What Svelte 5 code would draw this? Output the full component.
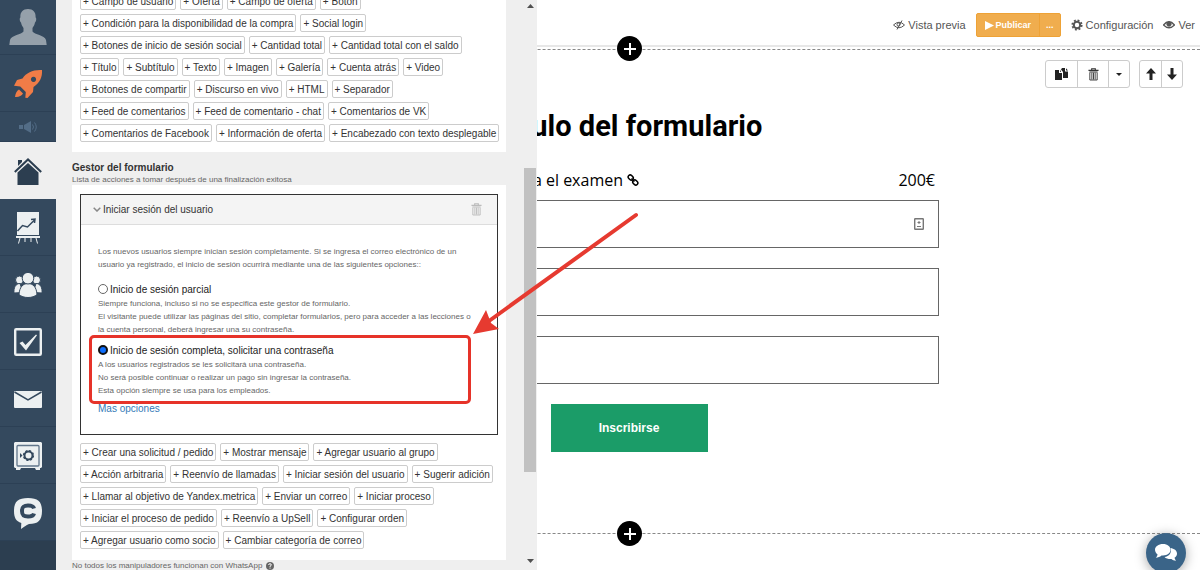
<script lang="ts">
	const fieldRows = [
		['Campo de usuario', 'Oferta', 'Campo de oferta', 'Botón'],
		['Condición para la disponibilidad de la compra', 'Social login'],
		['Botones de inicio de sesión social', 'Cantidad total', 'Cantidad total con el saldo'],
		['Título', 'Subtítulo', 'Texto', 'Imagen', 'Galería', 'Cuenta atrás', 'Video'],
		['Botones de compartir', 'Discurso en vivo', 'HTML', 'Separador'],
		['Feed de comentarios', 'Feed de comentario - chat', 'Comentarios de VK'],
		['Comentarios de Facebook', 'Información de oferta', 'Encabezado con texto desplegable']
	];

	const handlerRows = [
		['Crear una solicitud / pedido', 'Mostrar mensaje', 'Agregar usuario al grupo'],
		['Acción arbitraria', 'Reenvío de llamadas', 'Iniciar sesión del usuario', 'Sugerir adición'],
		['Llamar al objetivo de Yandex.metrica', 'Enviar un correo', 'Iniciar proceso'],
		['Iniciar el proceso de pedido', 'Reenvío a UpSell', 'Configurar orden'],
		['Agregar usuario como socio', 'Cambiar categoría de correo']
	];

	let loginMode = $state('full');
</script>

{#snippet chips(rows: string[][])}
	{#each rows as row}
		<div class="chip-row">
			{#each row as label}
				<button type="button" class="chip">+ {label}</button>
			{/each}
		</div>
	{/each}
{/snippet}

{#snippet trash()}
	<svg class="trash" viewBox="0 0 12 14" aria-hidden="true">
		<path d="M4 2V.7h4V2M.5 2.5h11M1.5 4.2h9" fill="none" stroke="currentColor" stroke-width="1.2" />
		<path d="M2 5v8h8V5M4.2 5v7.5M6 5v7.5M7.8 5v7.5" fill="none" stroke="currentColor" stroke-width="1" />
	</svg>
{/snippet}

<div class="app">
	<nav class="sidebar">
		<a href="#profile" class="profile" aria-label="Perfil">
			<svg width="38" height="38" viewBox="0 0 38 38">
				<path fill="#95a0aa" d="M19 1c5 0 8 3 7.600 8.500 1 .5.900 4-.6 5-.5 2.500-1.500 4-2.500 5.500v3.500c2 3 12 3.500 13.500 8.500l.7 5H.3L1 32c1.500-5 11.500-5.500 13.500-8.500V20c-1-1.500-2-3-2.500-5.500-1.500-1-1.600-4.500-.6-5C11 4 14 1 19 1z" />
			</svg>
		</a>
		<a href="#start" aria-label="Inicio rápido">
			<svg width="30" height="30" viewBox="0 0 30 30">
				<path fill="#f07c47" fill-rule="evenodd" d="M29 1c.5 7-2 12.500-8.500 17l-.5 5-5.500 6-2.200-.2.500-5.800-5.500-5.500-6.300-.8 3-5.700 5.500-1.500C13.500 3.500 20 .5 29 1zm-8.500 6.800a2.600 2.600 0 1 0 .01 0zM6 20.500l4 4c-1.500 2.500-4.500 4-8 3.500C2.500 24.500 3.500 22 6 20.500z" />
			</svg>
		</a>
		<a href="#news" class="short" aria-label="Novedades">
			<svg width="18" height="12" viewBox="0 0 18 12" fill="#536d87">
				<path d="M0 4h4v4H0zM5 4l7-4v12L5 8z" />
				<path d="M13.500 3.500q2 2.500 0 5M15.500 1.500q3.500 4.500 0 9" fill="none" stroke="#536d87" />
			</svg>
		</a>
		<a href="#home" class="active" aria-label="Inicio">
			<svg width="28" height="28" viewBox="0 0 28 28" fill="#2c3e50">
				<path d="M14 5l10.500 9.500V27h-21V14.500zM4 2h4v2L4 8z" />
				<path d="M.8 14L14 1.500 27.200 14" fill="none" stroke="#2c3e50" stroke-width="2" />
			</svg>
		</a>
		<a href="#stats" aria-label="Estadísticas">
			<svg width="24" height="32" viewBox="0 0 24 32">
				<path fill="#ecf0f1" d="M1 0h22v23H1zM0 24h24v2H0z" />
				<path d="M4 26l-1.500 5.500M9 26v4M15 26v4M20 26l1.500 5.500" stroke="#ecf0f1" fill="none" />
				<path d="M1.500 19l5-5.500 5 1.500 7-7M15 7.500l4-.5-.5 4" stroke="#34495e" stroke-width="1.500" fill="none" />
			</svg>
		</a>
		<a href="#users" aria-label="Usuarios">
			<svg width="28" height="26" viewBox="0 0 28 26" fill="#ecf0f1" stroke="#34495e">
				<circle cx="5.500" cy="8" r="4" /><circle cx="22.500" cy="8" r="4" />
				<path d="M0 21c-.5-5 1.500-9.500 6-9.500l3 9zM28 21c.5-5-1.500-9.500-6-9.500l-3 9z" />
				<path d="M5 22.500C5.500 15 9 11.500 14 11.500s8.500 3.500 9 11C19 26.500 9 26.500 5 22.500z" />
				<circle cx="14" cy="6.200" r="5.800" />
			</svg>
		</a>
		<a href="#tasks" aria-label="Tareas">
			<svg width="28" height="28" viewBox="0 0 28 28" fill="none">
				<rect x="1.200" y="1.200" width="25.600" height="25.600" rx="1" stroke="#ecf0f1" stroke-width="2.400" />
				<path fill="#ecf0f1" d="M5.500 15l3-1.500 3 3.500L22 6.500l1 .8L12 22.500z" />
			</svg>
		</a>
		<a href="#mail" aria-label="Mensajes">
			<svg width="28" height="17" viewBox="0 0 28 17">
				<rect width="28" height="17" rx="1" fill="#ecf0f1" />
				<path d="M.5 1L14 9 27.500 1" fill="none" stroke="#34495e" stroke-width="1.500" />
			</svg>
		</a>
		<a href="#safe" aria-label="Finanzas">
			<svg width="28" height="28" viewBox="0 0 28 28">
				<path fill="#ecf0f1" d="M1 0h26l1 1v24l-1 1h-1v2h-4l-1-2H7l-1 2H2v-2H1l-1-1V1z" />
				<rect x="3" y="3.500" width="22" height="20.500" rx="1" fill="none" stroke="#60758a" stroke-width="1.300" />
				<circle cx="14.500" cy="13.500" r="4" fill="none" stroke="#34495e" stroke-width="2" />
				<circle cx="14.500" cy="13.500" r="4.800" fill="none" stroke="#34495e" stroke-width="1.600" stroke-dasharray="2 1.770" />
				<path d="M6 11l2.500 2.500L6 16z" fill="#34495e" />
			</svg>
		</a>
		<a href="#chat" aria-label="Chat">
			<svg width="28" height="31" viewBox="0 0 28 31">
				<path fill="#ecf0f1" d="M14 0C24 0 28 3.500 28 13s-4 13-13 13c-3 1-5 3-8 5l.3-6C2 23 0 20 0 13 0 3.500 4 0 14 0z" />
				<path d="M20 10.500C19.500 8.500 18 7.500 14 7.500c-5 0-6 1.500-6 5.500s1 5.500 6 5.500c4 0 5.500-1 6-3" fill="none" stroke="#34495e" stroke-width="4" />
			</svg>
		</a>
	</nav>

	<main class="preview">
		<header class="topbar">
			<a href="#preview">
				<svg width="12" height="10" viewBox="0 0 12 10" fill="none" stroke="currentColor">
					<path d="M.5 5Q6-.5 11.500 5 6 10.500.5 5zM9 .5L4 9.500" /><circle cx="5.500" cy="4.500" r="1.500" />
				</svg>
				Vista previa
			</a>
			<div class="publish">
				<button type="button">
					<svg width="9" height="9" viewBox="0 0 9 9" fill="#fff"><path d="M0 0l9 4.500L0 9z" /></svg>
					Publicar
				</button>
				<button type="button" class="more" aria-label="Más">...</button>
			</div>
			<a href="#settings">
				<svg width="12" height="12" viewBox="0 0 12 12" fill="none" stroke="currentColor">
					<circle cx="6" cy="6" r="3.200" stroke-width="2" />
					<circle cx="6" cy="6" r="4.700" stroke-width="1.800" stroke-dasharray="1.900 1.790" />
				</svg>
				Configuración
			</a>
			<a href="#view">
				<svg width="12" height="10" viewBox="0 0 12 10" fill="none" stroke="currentColor">
					<path d="M.5 5Q6-1.500 11.500 5 6 10.500.5 5z" stroke-width="1.300" /><circle cx="6" cy="4" r="2.200" fill="currentColor" />
				</svg>
				Ver
			</a>
		</header>

		<section class="block">
			<button type="button" class="add top" aria-label="Agregar bloque arriba">
				<svg width="12" height="12" viewBox="0 0 12 12"><path d="M6 0v12M0 6h12" stroke="#fff" stroke-width="2" /></svg>
			</button>
			<div class="tools">
				<div class="tool-group">
					<button type="button" class="wide" aria-label="Copiar">
						<svg width="13" height="12" viewBox="0 0 13 12" fill="#222">
							<path d="M0 2h4v3h3v7H0zM5 1.500L6 4H5zM7 0h3v3.500h3V10H8V4L6 1.500zM11 .3L13 2.500h-2z" />
						</svg>
					</button>
					<button type="button" class="wide" aria-label="Eliminar">{@render trash()}</button>
					<button type="button" aria-label="Más acciones">
						<svg width="6" height="3" viewBox="0 0 6 3"><path d="M0 0h6L3 3z" fill="#222" /></svg>
					</button>
				</div>
				<div class="tool-group">
					<button type="button" aria-label="Subir">
						<svg width="10" height="12" viewBox="0 0 10 12"><path d="M5 0l5 5.500H6.500V12h-3V5.500H0z" fill="#222" /></svg>
					</button>
					<button type="button" aria-label="Bajar">
						<svg width="10" height="12" viewBox="0 0 10 12"><path d="M5 12l5-5.500H6.500V0h-3v6.500H0z" fill="#222" /></svg>
					</button>
				</div>
			</div>

			<form class="form" onsubmit={(e) => e.preventDefault()}>
				<h1>Título del formulario</h1>
				<div class="item">
					<span class="item-name">
						para el examen
						<svg width="12" height="12" viewBox="0 0 12 12" fill="none" stroke="#000" stroke-width="1.500">
							<rect x="1" y="1.500" width="5.500" height="4" rx="2" transform="rotate(45 3.700 3.500)" />
							<rect x="5.500" y="6.500" width="5.500" height="4" rx="2" transform="rotate(45 8.300 8.500)" />
							<path d="M4.500 4.500l3 3" />
						</svg>
					</span>
					<span>200€</span>
				</div>
				<label class="field">
					<input type="text" aria-label="Nombre" />
					<svg width="10" height="12" viewBox="0 0 10 12" fill="none" stroke="#777">
						<rect x=".7" y=".7" width="8.600" height="10.600" rx=".5" stroke-width="1.400" />
						<path d="M5 3v3M3.500 4.500h3M3 8.500h4" />
					</svg>
				</label>
				<label class="field"><input type="text" aria-label="Correo" /></label>
				<label class="field"><input type="text" aria-label="Teléfono" /></label>
				<button type="submit" class="submit">Inscribirse</button>
			</form>
			<button type="button" class="add bottom" aria-label="Agregar bloque abajo">
				<svg width="12" height="12" viewBox="0 0 12 12"><path d="M6 0v12M0 6h12" stroke="#fff" stroke-width="2" /></svg>
			</button>
		</section>
	</main>

	<aside class="panel">
		<div class="content">
			<div class="box fields">{@render chips(fieldRows)}</div>

			<h2>Gestor del formulario</h2>
			<p class="hint">Lista de acciones a tomar después de una finalización exitosa</p>

			<div class="box handlers">
				<div class="card">
					<div class="card-head">
						<svg width="8" height="5" viewBox="0 0 8 5"><path d="M.7.7L4 4 7.300.7" fill="none" stroke="#888" stroke-width="1.500" /></svg>
						<span>Iniciar sesión del usuario</span>
						<button type="button" class="remove" aria-label="Eliminar acción">{@render trash()}</button>
					</div>
					<div class="card-body">
						<p>
							Los nuevos usuarios siempre inician sesión completamente. Si se ingresa el correo electrónico de un<br />
							usuario ya registrado, el inicio de sesión ocurrirá mediante una de las siguientes opciones::
						</p>
						<div class="option">
							<label><input type="radio" name="login" value="partial" bind:group={loginMode} />Inicio de sesión parcial</label>
							<p>
								Siempre funciona, incluso si no se especifica este gestor de formulario.<br />
								El visitante puede utilizar las páginas del sitio, completar formularios, pero para acceder a las lecciones o<br />
								la cuenta personal, deberá ingresar una su contraseña.
							</p>
						</div>
						<div class="option highlighted">
							<label><input type="radio" name="login" value="full" bind:group={loginMode} />Inicio de sesión completa, solicitar una contraseña</label>
							<p>
								A los usuarios registrados se les solicitará una contraseña.<br />
								No será posible continuar o realizar un pago sin ingresar la contraseña.<br />
								Esta opción siempre se usa para los empleados.
							</p>
							<svg class="arrow" width="168" height="124" viewBox="0 0 168 124">
								<path d="M164 4L17 110" stroke="#e63a30" stroke-width="4" stroke-linecap="round" />
								<path d="M1 123L14 99l5 13 8 6z" fill="#e63a30" />
							</svg>
						</div>
						<a href="#more">Mas opciones</a>
					</div>
				</div>
				{@render chips(handlerRows)}
			</div>
			<p class="hint note">
				No todos los manipuladores funcionan con WhatsApp
				<svg width="8" height="8" viewBox="0 0 8 8">
					<circle cx="4" cy="4" r="4" fill="#666" />
					<path d="M2.600 3Q2.800 1.700 4 1.700T5.300 3Q5.200 3.700 4 4.300v.7M4 5.600v1" fill="none" stroke="#fff" />
				</svg>
			</p>
		</div>
		<div class="scrollbar" aria-hidden="true">
			<svg width="7" height="4" viewBox="0 0 7 4"><path d="M0 4h7L3.500 0z" fill="#505050" /></svg>
			<div class="track"><div class="thumb"></div></div>
			<svg width="7" height="4" viewBox="0 0 7 4"><path d="M0 0h7L3.500 4z" fill="#505050" /></svg>
		</div>
	</aside>

	<button type="button" class="support" aria-label="Soporte">
		<svg width="22" height="18" viewBox="0 0 22 18" fill="#fff">
			<path d="M15.500 4C19 4.500 22 6.500 22 9.500c0 2-1 3.500-2.500 4.300.2 1.200.8 2 1.500 3-2-.2-3.500-.8-4.500-1.800-3 .2-5.500-.5-7-2C14 12.500 17 9 15.500 4z" />
			<path d="M8 0c4.500 0 7.500 2.500 7.500 5.800S12.500 11.500 8 11.500l-1.500-.1C5 12.800 3 13.500.8 13.700c1-.9 1.600-2 1.700-3.400C1 9.300 0 7.700 0 5.800 0 2.500 3.500 0 8 0z" />
		</svg>
	</button>
</div>

<style>
	:global(body) {
		background: #fff;
		font-family: 'Liberation Sans', Arial, sans-serif;
		color: #333;
	}

	.app {
		display: grid;
		grid-template-columns: 56px 481px 1fr;
		grid-template-rows: 100vh;
		overflow: hidden;
	}

	.app :global(*),
	.highlighted::after {
		box-sizing: border-box;
	}

	svg {
		flex: none;
	}

	button {
		font-family: inherit;
		margin: 0;
		padding: 0;
		cursor: pointer;
	}

	h1,
	h2,
	p {
		margin: 0;
	}

	.sidebar {
		grid-area: 1 / 1;
		background: #2c3e50;
		overflow: hidden;
	}

	.sidebar a {
		display: flex;
		align-items: center;
		justify-content: center;
		height: 57px;
		padding-top: 2px;
		background: #34495e;
		border-bottom: 1px solid #2c4055;
	}

	.sidebar .profile {
		height: 55px;
		padding: 0;
	}

	.sidebar .short {
		height: 30px;
		padding: 0;
	}

	.sidebar .active {
		height: 57px;
		background: #efefef;
		border: 0;
	}

	/* the preview runs under the settings panel */
	.preview {
		grid-area: 1 / 2 / 2 / 4;
		display: flex;
		flex-direction: column;
		padding-left: 2px;
	}

	.topbar {
		display: flex;
		align-items: center;
		justify-content: flex-end;
		gap: 10px;
		height: 47px;
		padding: 5px 5px 0 0;
		border-bottom: 2px solid #e7e7e7;
	}

	.topbar a {
		display: flex;
		align-items: center;
		gap: 3px;
		font-size: 11px;
		color: #555;
		text-decoration: none;
	}

	.publish {
		display: flex;
		height: 24px;
		background: #f0ad4e;
		border: 1px solid #eea236;
		border-radius: 2px;
	}

	.publish button {
		display: flex;
		align-items: center;
		gap: 2px;
		padding: 0 8px;
		font-size: 9px;
		font-weight: 700;
		color: #fff;
		background: none;
		border: 0;
	}

	.publish .more {
		padding: 0 6px;
		border-left: 1px solid #eea236;
	}

	.block {
		position: relative;
		height: 485px;
		margin-top: 2px;
		border-top: 1px dashed #888;
		border-bottom: 1px dashed #888;
	}

	.add {
		position: absolute;
		left: calc(50% - 12px);
		display: flex;
		align-items: center;
		justify-content: center;
		width: 25px;
		height: 25px;
		background: #000;
		border: 0;
		border-radius: 50%;
	}

	.add.top {
		top: -14px;
	}

	.add.bottom {
		bottom: -13px;
	}

	.tools {
		display: flex;
		justify-content: flex-end;
		gap: 9px;
		padding: 10px 17px 0 0;
	}

	.tool-group {
		display: flex;
		height: 28px;
		border: 1px solid #ccc;
		border-radius: 3px;
	}

	.tool-group button {
		display: flex;
		align-items: center;
		justify-content: center;
		width: 21px;
		background: none;
		border: 0;
		color: #333;
	}

	.tool-group button + button {
		border-left: 1px solid #ccc;
	}

	.tool-group .wide {
		width: 31px;
	}

	.trash {
		width: 11px;
		height: 13px;
	}

	.form {
		display: flex;
		flex-direction: column;
		gap: 20px;
		max-width: 620px;
		margin: 18px auto 0;
	}

	h1 {
		font: 700 29px/40px Roboto, sans-serif;
		color: #000;
		text-align: center;
	}

	.item {
		display: flex;
		justify-content: space-between;
		height: 24px;
		margin: 2px 0 -12px;
		padding-right: 4px;
		font: 16px/24px 'Open Sans', sans-serif;
		color: #000;
	}

	.item-name {
		display: flex;
		align-items: center;
		justify-content: flex-end;
		gap: 4px;
		width: 320px;
	}

	.field {
		display: flex;
		align-items: center;
		height: 48px;
		padding-right: 14px;
		border: 1px solid #666;
	}

	.field input {
		flex: 1;
		height: 100%;
		border: 0;
		outline: 0;
		background: none;
	}

	.submit {
		align-self: center;
		width: 157px;
		height: 48px;
		font-size: 12px;
		font-weight: 700;
		color: #fff;
		background: #1b9c68;
		border: 0;
	}

	.panel {
		grid-area: 1 / 2;
		z-index: 1;
		display: flex;
		background: #efefef;
	}

	.content {
		flex: 1;
		min-width: 0;
		margin-top: -8px;
		padding: 0 18px 0 16px;
	}

	.box {
		padding: 0 8px;
		background: #fff;
	}

	.fields {
		padding-bottom: 6px;
	}

	.handlers {
		padding-top: 9px;
		padding-bottom: 7px;
	}

	.chip-row {
		display: flex;
		gap: 4px;
		height: 22px;
	}

	.chip {
		height: 18px;
		padding: 0 2px;
		font-size: 10px;
		color: #333;
		white-space: nowrap;
		background: #fff;
		border: 1px solid #ccc;
		border-radius: 2px;
	}

	h2 {
		margin-top: 10px;
		font-size: 10px;
		line-height: 12px;
	}

	.hint {
		height: 11px;
		font-size: 8px;
		line-height: 12px;
		color: #666;
	}

	.note {
		display: flex;
		gap: 4px;
		align-items: center;
	}

	.card {
		height: 241px;
		margin-bottom: 8px;
		border: 1px solid #333;
	}

	.card-head {
		display: flex;
		align-items: center;
		gap: 2px;
		height: 30px;
		padding: 0 15px 0 12px;
		font-size: 10px;
		background: #f4f4f4;
		border-bottom: 1px solid #ddd;
	}

	.remove {
		margin-left: auto;
		height: 13px;
		color: #bbb;
		background: none;
		border: 0;
	}

	.card-body {
		padding: 20px 0 0 17px;
		white-space: nowrap;
	}

	.card-body p {
		font-size: 8px;
		line-height: 13px;
		color: #666;
	}

	.option {
		margin-top: 8px;
	}

	.option label {
		display: flex;
		align-items: center;
		gap: 2px;
		height: 18px;
		padding-top: 2px;
		font-size: 10px;
		color: #222;
	}

	.option input {
		appearance: none;
		width: 10px;
		height: 10px;
		margin: 0;
		border: 1px solid #666;
		border-radius: 50%;
		background: #fff;
	}

	.option input:checked {
		border: 2px solid #111;
		background: #0d6efd;
	}

	.highlighted {
		position: relative;
		margin-top: 4px;
	}

	.highlighted::after {
		content: '';
		position: absolute;
		top: -5px;
		left: -9px;
		width: 382px;
		height: 69px;
		border: 3px solid #e63329;
		border-radius: 5px;
	}

	.arrow {
		position: absolute;
		top: -129px;
		left: 374px;
		z-index: 2;
	}

	.card-body a {
		display: block;
		font-size: 10px;
		line-height: 24px;
		color: #337ab7;
		text-decoration: none;
	}

	.scrollbar {
		display: flex;
		flex-direction: column;
		align-items: center;
		width: 13px;
		padding: 4px 0 7px;
	}

	.track {
		flex: 1;
		width: 100%;
		padding: 160px 1px 0 0;
	}

	.thumb {
		height: 304px;
		background: #c1c1c1;
	}

	.support {
		position: fixed;
		right: 14px;
		bottom: -3px;
		z-index: 3;
		display: flex;
		align-items: center;
		justify-content: center;
		width: 40px;
		height: 40px;
		background: #3a6488;
		border: 0;
		border-radius: 50%;
		box-shadow: 0 2px 12px rgba(0, 0, 0, 0.35);
	}
</style>
